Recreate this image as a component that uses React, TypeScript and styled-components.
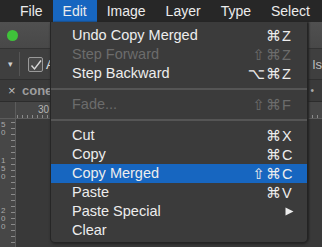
import React from 'react'
import styled, { createGlobalStyle } from 'styled-components'

const GlobalStyle = createGlobalStyle`
  html, body { margin: 0; padding: 0; background: #2e2e2e; overflow: hidden; }
  body { font-family: "Liberation Sans", "DejaVu Sans", Arial, sans-serif; }
`

type Item =
  | { kind: 'sep' }
  | { kind: 'item'; label: string; mods?: string; keyName?: string; disabled?: boolean; active?: boolean; submenu?: boolean }

const menuTitles = ['File', 'Edit', 'Image', 'Layer', 'Type', 'Select']

const items: Item[] = [
  { kind: 'item', label: 'Undo Copy Merged', mods: '⌘', keyName: 'Z' },
  { kind: 'item', label: 'Step Forward', mods: '⇧⌘', keyName: 'Z', disabled: true },
  { kind: 'item', label: 'Step Backward', mods: '⌥⌘', keyName: 'Z' },
  { kind: 'sep' },
  { kind: 'item', label: 'Fade...', mods: '⇧⌘', keyName: 'F', disabled: true },
  { kind: 'sep' },
  { kind: 'item', label: 'Cut', mods: '⌘', keyName: 'X' },
  { kind: 'item', label: 'Copy', mods: '⌘', keyName: 'C' },
  { kind: 'item', label: 'Copy Merged', mods: '⇧⌘', keyName: 'C', active: true },
  { kind: 'item', label: 'Paste', mods: '⌘', keyName: 'V' },
  { kind: 'item', label: 'Paste Special', submenu: true },
  { kind: 'item', label: 'Clear' },
]

export default function App() {
  return (
    <>
      <GlobalStyle />
      <Screen>
        <MenuBar>
          {menuTitles.map(t => (
            <MenuTitle key={t} $active={t === 'Edit'}>{t}</MenuTitle>
          ))}
        </MenuBar>
        <Workspace>
          <TitleBar>
            <GreenDot />
          </TitleBar>
          <OptionsBar>
            <SmallArrow>▾</SmallArrow>
            <VDivider />
            <CheckBox>
              <svg width="12" height="12" viewBox="0 0 12 12">
                <path d="M1.5 6.5 L4.5 10 L11 1.5" fill="none" stroke="#d8d8d8" strokeWidth="1.4" />
              </svg>
            </CheckBox>
            <OptLabel>A</OptLabel>
            <Spacer />
            <OptLabel $dim>ls</OptLabel>
          </OptionsBar>
          <TabBar>
            <TabClose>×</TabClose>
            <TabName>cone-</TabName>
            <Spacer />
            <TabDot>•</TabDot>
          </TabBar>
          <HRulerRow>
            <RulerCorner />
            <HRuler>
              <RulerNum>30</RulerNum>
            </HRuler>
          </HRulerRow>
          <Body>
            <VRuler>
              <VNum $top={2}>5<br />0</VNum>
              <VNum $top={38}>1<br />5<br />0</VNum>
              <VNum $top={88}>2<br />0<br />0</VNum>
            </VRuler>
            <Canvas />
          </Body>
        </Workspace>

        <Menu>
          {items.map((it, i) =>
            it.kind === 'sep' ? (
              <Separator key={i} />
            ) : (
              <Row key={i} $active={it.active} $disabled={it.disabled}>
                <span>{it.label}</span>
                {it.submenu ? (
                  <svg width="9" height="9" viewBox="0 0 9 9">
                    <path d="M0.5 0.5 L8.5 4.5 L0.5 8.5 Z" fill="#ececec" />
                  </svg>
                ) : it.keyName ? (
                  <Shortcut>
                    <Mods>{it.mods}</Mods>
                    <KeyName>{it.keyName}</KeyName>
                  </Shortcut>
                ) : null}
              </Row>
            )
          )}
        </Menu>
      </Screen>
    </>
  )
}

const Screen = styled.div`
  position: relative;
  width: 322px;
  height: 247px;
  overflow: hidden;
  display: flex;
  flex-direction: column;
  background: #2e2e2e;
`

const MenuBar = styled.div`
  height: 22px;
  flex: none;
  display: flex;
  padding-left: 10px;
  background: #272727;
`

const MenuTitle = styled.div<{ $active?: boolean }>`
  padding: 0 10px;
  line-height: 22px;
  font-size: 14px;
  color: #ececec;
  background: ${p => (p.$active ? '#1766c0' : 'transparent')};
`

const Workspace = styled.div`
  flex: 1;
  display: flex;
  flex-direction: column;
`

const TitleBar = styled.div`
  height: 26px;
  flex: none;
  display: flex;
  align-items: center;
  padding-left: 7px;
  background: linear-gradient(#505050, #484848);
  border-bottom: 1px solid #333;
`

const GreenDot = styled.div`
  width: 11px;
  height: 11px;
  border-radius: 50%;
  background: #3fc23a;
`

const OptionsBar = styled.div`
  height: 30px;
  flex: none;
  display: flex;
  align-items: center;
  padding-left: 8px;
  background: #3f3f3f;
  border-bottom: 1px solid #2f2f2f;
`

const SmallArrow = styled.span`
  font-size: 9px;
  color: #cfcfcf;
  width: 8px;
`

const VDivider = styled.div`
  width: 1px;
  height: 24px;
  background: #555;
  margin: 0 8px 0 3px;
`

const CheckBox = styled.div`
  width: 13px;
  height: 13px;
  border: 1px solid #9a9a9a;
  border-radius: 2px;
  background: #4a4a4a;
  display: flex;
  align-items: flex-end;
  justify-content: center;
`

const OptLabel = styled.span<{ $dim?: boolean }>`
  margin-left: 3px;
  font-size: 13px;
  color: ${p => (p.$dim ? '#bdbdbd' : '#e0e0e0')};
`

const Spacer = styled.div`
  flex: 1;
`

const TabBar = styled.div`
  height: 21px;
  flex: none;
  display: flex;
  align-items: center;
  padding-left: 8px;
  background: #3a3a3a;
  border-bottom: 1px solid #2c2c2c;
`

const TabClose = styled.span`
  font-size: 13px;
  color: #bdbdbd;
  width: 14px;
`

const TabName = styled.span`
  font-size: 13px;
  font-weight: bold;
  color: #9d9d9d;
`

const TabDot = styled.span`
  font-size: 10px;
  color: #aaa;
  margin-right: 8px;
`

const HRulerRow = styled.div`
  height: 16px;
  flex: none;
  display: flex;
  background: #474747;
  border-bottom: 1px solid #5c5c5c;
`

const RulerCorner = styled.div`
  width: 15px;
  background: #444;
  border-right: 1px solid #5c5c5c;
`

const HRuler = styled.div`
  flex: 1;
  position: relative;
  background-image: repeating-linear-gradient(90deg, #8a8a8a 0 1px, transparent 1px 5px);
  background-size: 100% 3px;
  background-position: 1px bottom;
  background-repeat: no-repeat;
`

const RulerNum = styled.span`
  position: absolute;
  left: 22px;
  top: 2px;
  font-size: 10px;
  color: #b5b5b5;
`

const Body = styled.div`
  flex: 1;
  display: flex;
`

const VRuler = styled.div`
  width: 15px;
  position: relative;
  background: #474747;
  border-right: 1px solid #5c5c5c;
  background-image: repeating-linear-gradient(180deg, #8a8a8a 0 1px, transparent 1px 6px);
  background-size: 4px 100%;
  background-position: right 3px;
  background-repeat: no-repeat;
`

const VNum = styled.div<{ $top: number }>`
  position: absolute;
  left: 1px;
  top: ${p => p.$top}px;
  font-size: 8px;
  line-height: 8px;
  color: #aaa;
`

const Canvas = styled.div`
  flex: 1;
  background: #393939;
`

const Menu = styled.div`
  position: absolute;
  top: 22px;
  left: 51px;
  width: 256px;
  padding: 4px 0 2px;
  background: #3b3b3b;
  border-radius: 0 0 4px 4px;
  box-shadow: -1px 0 0 #262626, 2px 0 2px #232323, 0 2px 3px #222;
`

const Row = styled.div<{ $active?: boolean; $disabled?: boolean }>`
  height: 19px;
  display: flex;
  align-items: center;
  justify-content: space-between;
  padding: 0 13px 0 21px;
  font-size: 14.5px;
  line-height: 19px;
  color: ${p => (p.$disabled ? '#6c6c6c' : '#ededed')};
  background: ${p => (p.$active ? '#1766c0' : 'transparent')};
`

const Shortcut = styled.span`
  display: flex;
  align-items: baseline;
`

const Mods = styled.span`
  text-align: right;
  font-size: 15px;
  letter-spacing: 1px;
`

const KeyName = styled.span`
  width: 12px;
  text-align: left;
`

const Separator = styled.div`
  height: 12px;
  display: flex;
  align-items: center;
  &::after {
    content: '';
    flex: 1;
    height: 2px;
    background: #555555;
  }
`
